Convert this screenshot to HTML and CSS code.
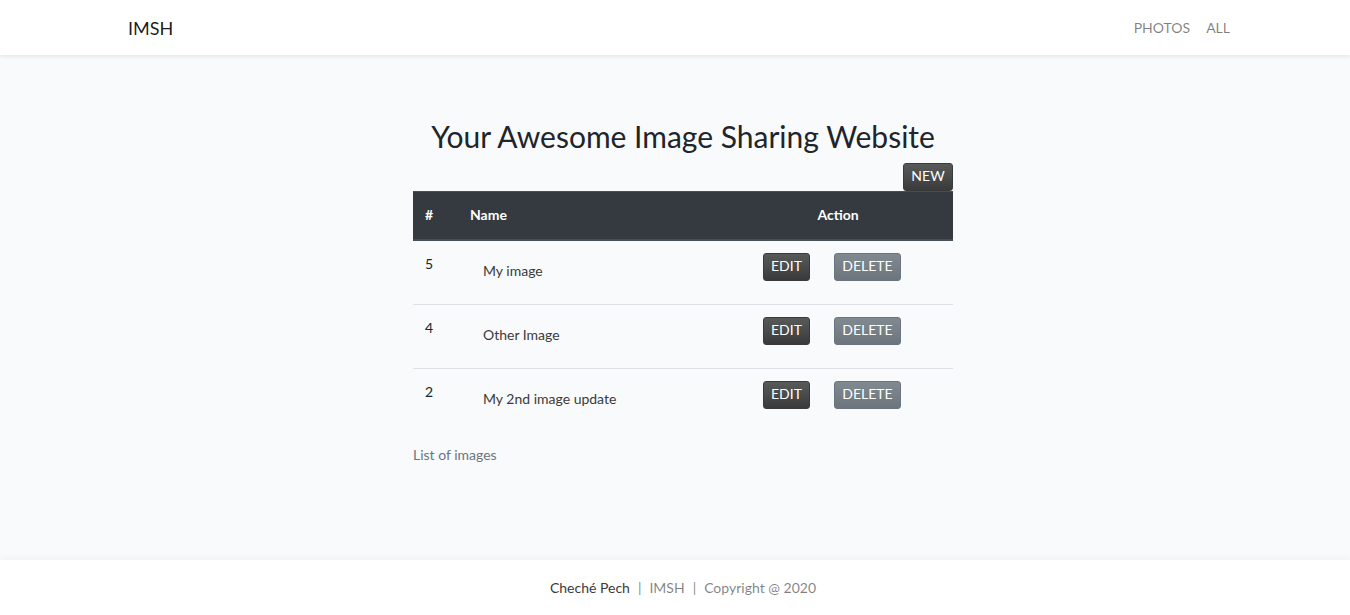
FILE: index.html
```html
<!DOCTYPE html>
<html lang="en">
<head>
<meta charset="utf-8">
<meta name="viewport" content="width=device-width, initial-scale=1">
<title>IMSH</title>
<link rel="stylesheet" href="styles.css">
</head>
<body>
<header class="navbar">
  <div class="container navbar-inner">
    <a class="brand" href="#">IMSH</a>
    <nav class="nav">
      <a class="nav-link" href="#">PHOTOS</a>
      <a class="nav-link" href="#">ALL</a>
    </nav>
  </div>
</header>
<main class="main">
  <section class="content">
    <h2 class="title">Your Awesome Image Sharing Website</h2>
    <div class="toolbar"><button class="btn btn-primary btn-new" type="button">NEW</button></div>
    <table class="table">
      <caption class="caption">List of images</caption>
      <thead>
        <tr><th class="col-id" scope="col">#</th><th class="col-name" scope="col">Name</th><th class="col-action" scope="col">Action</th></tr>
      </thead>
      <tbody>
        <tr>
          <td>5</td>
          <td><a class="image-link" href="#">My image</a></td>
          <td><div class="actions"><button class="btn btn-primary btn-edit" type="button">EDIT</button><button class="btn btn-secondary" type="button">DELETE</button></div></td>
        </tr>
        <tr>
          <td>4</td>
          <td><a class="image-link" href="#">Other Image</a></td>
          <td><div class="actions"><button class="btn btn-primary btn-edit" type="button">EDIT</button><button class="btn btn-secondary" type="button">DELETE</button></div></td>
        </tr>
        <tr>
          <td>2</td>
          <td><a class="image-link" href="#">My 2nd image update</a></td>
          <td><div class="actions"><button class="btn btn-primary btn-edit" type="button">EDIT</button><button class="btn btn-secondary" type="button">DELETE</button></div></td>
        </tr>
      </tbody>
    </table>
  </section>
</main>
<footer class="footer">
  <a class="author" href="#">Cheché Pech</a><span>|</span><span>IMSH</span><span>|</span><span>Copyright @ 2020</span>
</footer>
</body>
</html>
```
FILE: styles.css
```css
* { box-sizing: border-box; }

body {
  margin: 0;
  min-height: 100vh;
  display: flex;
  flex-direction: column;
  background: #f8fafc;
  color: #212529;
  font-family: Lato, "Open Sans", sans-serif;
  font-size: 14px;
  line-height: 22px;
}

a { color: inherit; text-decoration: none; }

.navbar, .main, .footer { padding-left: 16px; }

.navbar {
  background: #fff;
  box-shadow: 0 2px 4px rgba(0, 0, 0, 0.08);
}

.container {
  max-width: 1140px;
  margin: 0 auto;
  padding: 0 15px;
}

.navbar-inner {
  display: flex;
  align-items: center;
  justify-content: space-between;
  height: 55px;
}

.brand { font-size: 18px; color: rgba(0, 0, 0, 0.9); }

.nav { display: flex; }

.nav-link { padding: 8px; color: rgba(0, 0, 0, 0.5); }

.main { flex: 1; }

.content {
  max-width: 540px;
  margin: 0 auto;
  padding-top: 64px;
}

.title {
  margin: 0 0 9px;
  font-size: 30px;
  line-height: 35px;
  font-weight: 400;
  text-align: center;
}

.toolbar { display: flex; justify-content: flex-end; }

.btn {
  height: 28px;
  padding: 0 7px 2px;
  border: 1px solid;
  border-radius: 3px;
  color: #fff;
  font: inherit;
  line-height: 20px;
  cursor: pointer;
}

.btn-primary { background: linear-gradient(#585a5a, #3b3a3a); border-color: #3b3a3a; }
.btn-secondary { background: linear-gradient(#828a91, #6c757d); border-color: #6c757d; }
.btn-new { min-width: 50px; }
.btn-edit { min-width: 47px; }
.btn-secondary { min-width: 67px; }

.table {
  width: 100%;
  table-layout: fixed;
  border-collapse: separate;
  border-spacing: 0;
}

.table th {
  padding: 12px 12px 13px;
  background: #343a40;
  color: #fff;
  font-weight: 700;
  text-align: left;
  border-top: 1px solid #454d55;
  border-bottom: 2px solid #454d55;
}

.table td {
  height: 64px;
  padding: 12px;
  vertical-align: top;
  border-bottom: 1px solid #dee2e6;
}

.table tbody tr:last-child td { border-bottom: 0; }

.table .col-id { width: 45px; }
.table .col-action { width: 230px; text-align: center; }

.image-link {
  display: inline-block;
  padding: 7px 13px;
  color: #3b3a3a;
}

.actions {
  display: flex;
  justify-content: center;
  gap: 24px;
  padding-right: 12px;
}

.caption {
  caption-side: bottom;
  padding: 11px 0;
  color: #6c757d;
  text-align: left;
}

.footer {
  display: flex;
  align-items: center;
  justify-content: center;
  gap: 8px;
  height: 55px;
  background: #fff;
  box-shadow: 0 -2px 8px rgba(0, 0, 0, 0.04);
  color: rgba(0, 0, 0, 0.5);
}

.author { color: #3b3a3a; }
```
